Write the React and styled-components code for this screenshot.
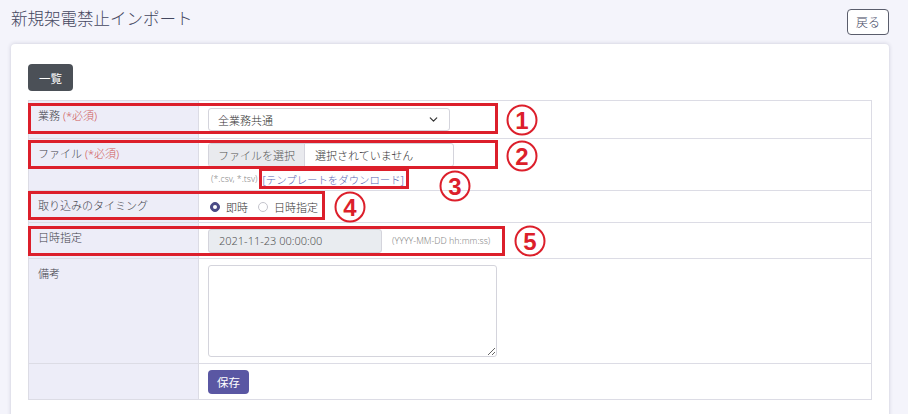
import React from "react";
import styled, { createGlobalStyle } from "styled-components";
import { ChevronDown } from "lucide-react";

const GlobalStyle = createGlobalStyle`
  html, body {
    margin: 0;
    padding: 0;
    background: #f4f4fb;
    font-family: "Noto Sans", "Noto Sans CJK JP", sans-serif;
    color: #444;
  }
`;

const Page = styled.div`
  position: relative;
  min-height: 414px;
  padding: 0 19px 0 11px;
  box-sizing: border-box;
  overflow: hidden;
`;

const Header = styled.div`
  display: flex;
  justify-content: space-between;
  align-items: flex-start;
  height: 44px;
  padding-top: 9px;
  box-sizing: border-box;
`;

const Title = styled.h1`
  margin: 0;
  font-size: 16.5px;
  font-weight: 300;
  line-height: 20px;
  color: #44475f;
`;

const BackButton = styled.button`
  height: 26px;
  width: 42px;
  padding: 0;
  border: 1px solid #5a5d6c;
  border-radius: 4px;
  background: #fff;
  color: #44475f;
  font-family: inherit;
  font-weight: 300;
  font-size: 12px;
`;

const Card = styled.div`
  background: #fff;
  border-radius: 4px;
  box-shadow: 0 0 4px rgba(40, 40, 80, 0.2);
  padding: 20px 17px 30px;
`;

const DarkButton = styled.button`
  border: none;
  border-radius: 4px;
  background: ${p => (p.$primary ? "#5a57a3" : "#4b5057")};
  color: #fff;
  font-family: inherit;
  font-size: 11.5px;
  height: ${p => (p.$primary ? "24px" : "27px")};
  padding: ${p => (p.$primary ? "0 9px" : "0 11px")};
`;

const Table = styled.table`
  width: 100%;
  margin-top: 9px;
  border-collapse: collapse;
  border: 1px solid #dcdce5;
  font-size: 11px;
  font-weight: 300;
`;

const Row = styled.tr`
  border-top: 1px solid #dcdce5;
  height: ${p => p.$h}px;
`;

const Label = styled.th`
  width: 160px;
  background: #ededf8;
  text-align: left;
  vertical-align: top;
  font-weight: 300;
  color: #3f3f4a;
  padding: 6px 0 0 9px;
  border-right: 1px solid #dcdce5;
`;

const Required = styled.span`
  color: #cf5a5a;
  margin-left: 3px;
`;

const Cell = styled.td`
  padding: 0 9px;
  vertical-align: middle;
`;

const Select = styled.div`
  width: 242px;
  height: 23px;
  box-sizing: border-box;
  border: 1px solid #d4d4dc;
  border-radius: 3px;
  display: flex;
  align-items: center;
  justify-content: space-between;
  padding: 0 9px;
  color: #333;
`;

const FileInput = styled.div`
  width: 246px;
  height: 24px;
  box-sizing: border-box;
  border: 1px solid #d4d4dc;
  border-radius: 3px;
  display: flex;
  align-items: stretch;
  overflow: hidden;
  color: #333;
`;

const FileButton = styled.span`
  display: flex;
  align-items: center;
  padding: 0 9px;
  background: #e9eaee;
  border-right: 1px solid #d4d4dc;
  color: #555;
`;

const FileName = styled.span`
  display: flex;
  align-items: center;
  padding: 0 10px;
`;

const HelpLine = styled.div`
  display: flex;
  align-items: center;
  margin-top: 5px;
  padding-left: 3px;
`;

const Hint = styled.span`
  font-size: 8.8px;
  color: #888;
  margin-right: ${p => (p.$left ? "0" : "5px")};
  margin-left: ${p => (p.$left ? "10px" : "0")};
`;

const Link = styled.a`
  color: #5b66b3;
  font-size: 10.4px;
  text-decoration: none;
`;

const Radios = styled.div`
  display: flex;
  align-items: center;
  gap: 10px;
  padding-left: 2px;
`;

const RadioItem = styled.label`
  display: flex;
  align-items: center;
  gap: 6px;
  color: #333;
`;

const RadioDot = styled.span`
  width: 10px;
  height: 10px;
  border-radius: 50%;
  box-sizing: border-box;
  background: ${p => (p.$on ? "#4a4b86" : "#fff")};
  border: 1px solid ${p => (p.$on ? "#4a4b86" : "#c4c4cc")};
  display: flex;
  align-items: center;
  justify-content: center;
  &::after {
    content: "";
    width: 4px;
    height: 4px;
    border-radius: 50%;
    background: ${p => (p.$on ? "#fff" : "transparent")};
  }
`;

const DateRow = styled.div`
  display: flex;
  align-items: center;
`;

const DateInput = styled.div`
  width: 174px;
  height: 24px;
  box-sizing: border-box;
  border: 1px solid #d4d4dc;
  border-radius: 3px;
  background: #e9ecf0;
  display: flex;
  align-items: center;
  padding-left: 10px;
  color: #555;
`;

const TextArea = styled.textarea`
  display: block;
  width: 289px;
  height: 92px;
  box-sizing: border-box;
  border: 1px solid #d4d4dc;
  border-radius: 3px;
  margin: 0;
`;

const Mark = styled.div`
  position: absolute;
  left: ${p => p.$x}px;
  top: ${p => p.$y}px;
  width: ${p => p.$w}px;
  height: ${p => p.$h}px;
  border: 3px solid #dc1f2b;
  box-sizing: border-box;
  pointer-events: none;
`;

/* circled annotation number drawn as a ring with the digit inside */
const Num = styled.div`
  position: absolute;
  left: ${p => p.$x}px;
  top: ${p => p.$y}px;
  transform: translate(-50%, -50%);
  width: 31px;
  height: 31px;
  box-sizing: border-box;
  border: 2.5px solid #dc1f2b;
  border-radius: 50%;
  display: flex;
  align-items: center;
  justify-content: center;
  color: #dc1f2b;
  font-family: "Liberation Sans", sans-serif;
  font-size: 24px;
  font-weight: 700;
  line-height: 1;
`;

const marks = [
  { x: 28, y: 103, w: 470, h: 31 },
  { x: 28, y: 140, w: 470, h: 29 },
  { x: 259, y: 168, w: 150, h: 21 },
  { x: 28, y: 191, w: 297, h: 29 },
  { x: 28, y: 226, w: 477, h: 30 }
];

const nums = [
  { x: 522, y: 120, t: "1" },
  { x: 522, y: 156, t: "2" },
  { x: 455, y: 186, t: "3" },
  { x: 350, y: 207, t: "4" },
  { x: 530, y: 241, t: "5" }
];

export default function App() {
  return (
    <>
      <GlobalStyle />
      <Page>
        <Header>
          <Title>新規架電禁止インポート</Title>
          <BackButton>戻る</BackButton>
        </Header>
        <Card>
          <DarkButton>一覧</DarkButton>
          <Table>
            <tbody>
              <Row $h={38}>
                <Label>
                  業務<Required>(*必須)</Required>
                </Label>
                <Cell>
                  <Select>
                    全業務共通
                    <ChevronDown size={13} strokeWidth={2.2} color="#333" />
                  </Select>
                </Cell>
              </Row>
              <Row $h={52}>
                <Label>
                  ファイル<Required>(*必須)</Required>
                </Label>
                <Cell>
                  <FileInput>
                    <FileButton>ファイルを選択</FileButton>
                    <FileName>選択されていません</FileName>
                  </FileInput>
                  <HelpLine>
                    <Hint>(*.csv, *.tsv)</Hint>
                    <Link>[テンプレートをダウンロード]</Link>
                  </HelpLine>
                </Cell>
              </Row>
              <Row $h={32}>
                <Label>取り込みのタイミング</Label>
                <Cell>
                  <Radios>
                    <RadioItem>
                      <RadioDot $on />
                      即時
                    </RadioItem>
                    <RadioItem>
                      <RadioDot />
                      日時指定
                    </RadioItem>
                  </Radios>
                </Cell>
              </Row>
              <Row $h={36}>
                <Label>日時指定</Label>
                <Cell>
                  <DateRow>
                    <DateInput>2021-11-23 00:00:00</DateInput>
                    <Hint $left>(YYYY-MM-DD hh:mm:ss)</Hint>
                  </DateRow>
                </Cell>
              </Row>
              <Row $h={105}>
                <Label>備考</Label>
                <Cell>
                  <TextArea />
                </Cell>
              </Row>
              <Row $h={36}>
                <Label />
                <Cell>
                  <DarkButton $primary>保存</DarkButton>
                </Cell>
              </Row>
            </tbody>
          </Table>
        </Card>
        {marks.map((m, i) => (
          <Mark key={i} $x={m.x} $y={m.y} $w={m.w} $h={m.h} />
        ))}
        {nums.map((n, i) => (
          <Num key={i} $x={n.x} $y={n.y}>
            {n.t}
          </Num>
        ))}
      </Page>
    </>
  );
}
